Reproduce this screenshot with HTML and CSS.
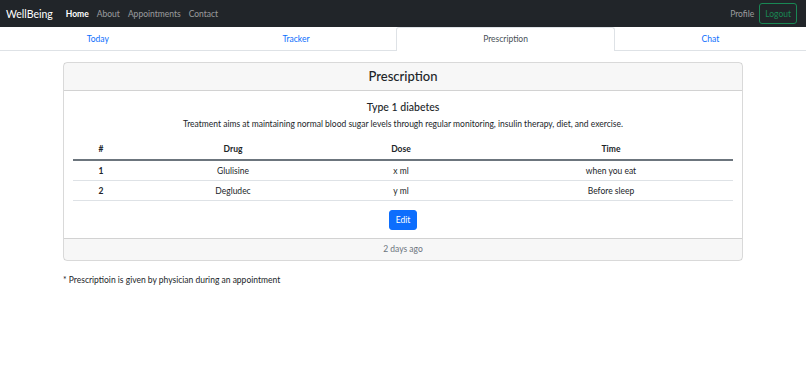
FILE: index.html
```html
<!DOCTYPE html>
<html lang="en">
<head>
  <meta charset="UTF-8">
  <meta name="viewport" content="width=device-width, initial-scale=1.0">
  <title>WellBeing - Prescription</title>
  <link rel="stylesheet" href="styles.css">
</head>
<body>
  <nav class="navbar">
    <a class="brand" href="#">WellBeing</a>
    <ul class="nav-links">
      <li><a class="active" href="#">Home</a></li>
      <li><a href="#">About</a></li>
      <li><a href="#">Appointments</a></li>
      <li><a href="#">Contact</a></li>
    </ul>
    <div class="nav-right">
      <a href="#">Profile</a>
      <button class="btn-logout">Logout</button>
    </div>
  </nav>

  <ul class="tabs">
    <li><a href="#">Today</a></li>
    <li><a href="#">Tracker</a></li>
    <li><a class="active" href="#">Prescription</a></li>
    <li><a href="#">Chat</a></li>
  </ul>

  <div class="container">
    <div class="card">
      <div class="card-header">Prescription</div>
      <div class="card-body">
        <h5 class="card-title">Type 1 diabetes</h5>
        <p class="card-text">Treatment aims at maintaining normal blood sugar levels through regular monitoring, insulin therapy, diet, and exercise.</p>
        <table class="table">
          <colgroup>
            <col class="col-num">
            <col class="col-drug">
            <col class="col-dose">
            <col class="col-time">
          </colgroup>
          <thead>
            <tr>
              <th>#</th>
              <th>Drug</th>
              <th>Dose</th>
              <th class="cell-time">Time</th>
            </tr>
          </thead>
          <tbody>
            <tr>
              <th>1</th>
              <td>Glulisine</td>
              <td>x ml</td>
              <td class="cell-time">when you eat</td>
            </tr>
            <tr>
              <th>2</th>
              <td>Degludec</td>
              <td>y ml</td>
              <td class="cell-time">Before sleep</td>
            </tr>
          </tbody>
        </table>
        <button class="btn-edit">Edit</button>
      </div>
      <div class="card-footer">2 days ago</div>
    </div>
    <p class="note">* Prescriptioin is given by physician during an appointment</p>
  </div>
</body>
</html>
```

FILE: styles.css
```css
body {
  margin: 0;
  font-family: Lato, "Open Sans", sans-serif;
  font-size: 8.5px;
  color: #212529;
  background-color: #fff;
}

a {
  text-decoration: none;
}

ul {
  list-style: none;
  margin: 0;
  padding: 0;
}

/* top navbar */
.navbar {
  display: flex;
  align-items: center;
  height: 27px;
  padding: 0 9px 0 6px;
  background-color: #212529;
}

.brand {
  color: #fff;
  font-size: 10.5px;
  margin-right: 13px;
}

.nav-links {
  display: flex;
  gap: 8px;
  font-size: 8.5px;
}

.nav-links a {
  color: rgba(255, 255, 255, 0.55);
}

.nav-links a.active {
  color: #fff;
  font-weight: 700;
}

.nav-right {
  margin-left: auto;
  display: flex;
  align-items: center;
  gap: 5px;
  font-size: 8.5px;
}

.nav-right a {
  color: rgba(255, 255, 255, 0.55);
}

.btn-logout {
  font-family: inherit;
  font-size: 8.5px;
  color: #198754;
  background: transparent;
  border: 1px solid #198754;
  border-radius: 3px;
  height: 21px;
  padding: 0 5px;
}

/* tabs */
.tabs {
  display: flex;
  border-bottom: 1px solid #dee2e6;
}

.tabs li {
  flex: 1 1 auto;
  text-align: center;
}

.tabs a {
  display: block;
  height: 22px;
  line-height: 22px;
  color: #0d6efd;
  border: 1px solid transparent;
  border-bottom: 0;
  border-radius: 3px 3px 0 0;
  margin-bottom: -1px;
  padding-bottom: 1px;
}

.tabs a.active {
  color: #495057;
  background-color: #fff;
  border-color: #dee2e6;
}

/* prescription card */
.container {
  max-width: 680px;
  margin: 11px auto 0;
}

.card {
  border: 1px solid rgba(0, 0, 0, 0.15);
  border-radius: 4px;
  text-align: center;
}

.card-header {
  height: 27px;
  line-height: 26px;
  font-size: 13px;
  font-weight: 500;
  background-color: rgba(0, 0, 0, 0.03);
  border-bottom: 1px solid rgba(0, 0, 0, 0.15);
}

.card-body {
  padding: 9px 9px 8px;
}

.card-title {
  margin: 0 0 3px;
  font-size: 10.5px;
  font-weight: 500;
  line-height: 15px;
}

.card-text {
  margin: 0 0 8px;
  line-height: 13px;
}

.table {
  width: 100%;
  border-collapse: collapse;
  margin-bottom: 9px;
}

.col-num { width: 56px; }
.col-drug { width: 208px; }
.col-dose { width: 128px; }

.table th,
.table td {
  height: 19px;
  padding: 0 4px;
  border-bottom: 1px solid #dee2e6;
  font-weight: 400;
}

.table th {
  font-weight: 700;
}

.table thead th {
  height: 20px;
  border-bottom: 2px solid #6c757d;
}

.table .cell-time {
  padding-left: 28px;
}

.btn-edit {
  font-family: inherit;
  font-size: 8.5px;
  color: #fff;
  background-color: #0d6efd;
  border: 1px solid #0d6efd;
  border-radius: 3px;
  width: 28px;
  height: 20px;
  padding: 0;
}

.card-footer {
  height: 21px;
  line-height: 21px;
  color: #6c757d;
  background-color: rgba(0, 0, 0, 0.03);
  border-top: 1px solid rgba(0, 0, 0, 0.15);
}

.note {
  margin: 14px 0 0;
}
```
